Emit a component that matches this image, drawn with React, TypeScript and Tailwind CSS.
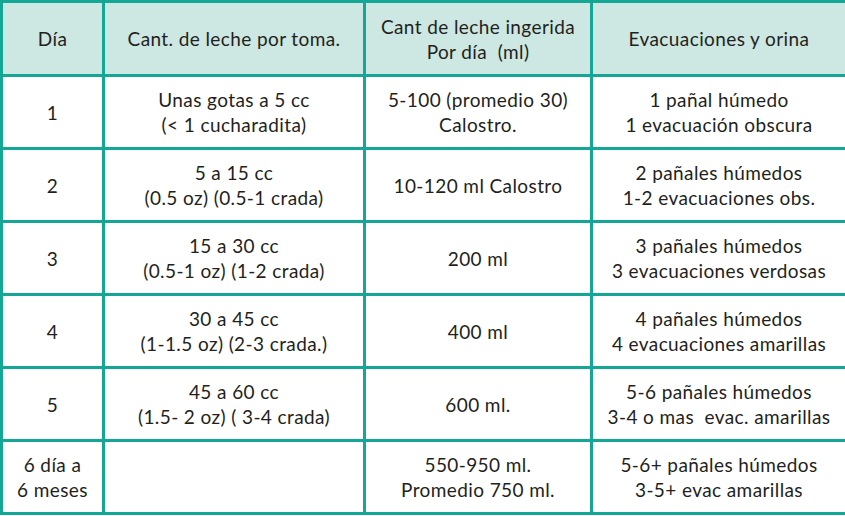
const rows: [string[], string[], string[], string[]][] = [
  [["1"], ["Unas gotas a 5 cc", "(< 1 cucharadita)"], ["5-100 (promedio 30)", "Calostro."], ["1 pañal húmedo", "1 evacuación obscura"]],
  [["2"], ["5 a 15 cc", "(0.5 oz) (0.5-1 crada)"], ["10-120 ml Calostro"], ["2 pañales húmedos", "1-2 evacuaciones obs."]],
  [["3"], ["15 a 30 cc", "(0.5-1 oz) (1-2 crada)"], ["200 ml"], ["3 pañales húmedos", "3 evacuaciones verdosas"]],
  [["4"], ["30 a 45 cc", "(1-1.5 oz) (2-3 crada.)"], ["400 ml"], ["4 pañales húmedos", "4 evacuaciones amarillas"]],
  [["5"], ["45 a 60 cc", "(1.5- 2 oz) ( 3-4 crada)"], ["600 ml."], ["5-6 pañales húmedos", "3-4 o mas\u00a0 evac. amarillas"]],
  [["6 día a", "6 meses"], [], ["550-950 ml.", "Promedio 750 ml."], ["5-6+ pañales húmedos", "3-5+ evac amarillas"]],
];

function Lines({ lines }: { lines: string[] }) {
  return (
    <>
      {lines.map((l, i) => (
        <div key={i} className="whitespace-pre">
          {l}
        </div>
      ))}
    </>
  );
}

export default function App() {
  const cell = "border-[3px] border-[#14a796] text-center align-middle px-0";
  return (
    <div className="w-[845px] h-[516px] bg-white font-['Lato',sans-serif] text-[19px] leading-[25px] tracking-[0.4px] text-[#231f20]">
      <table className="w-[845px] border-collapse table-fixed">
        <colgroup>
          <col className="w-[102px]" />
          <col className="w-[261px]" />
          <col className="w-[227px]" />
          <col className="w-[255px]" />
        </colgroup>
        <thead>
          <tr className="h-[74px] bg-[#cde7e2]">
            <th className={`${cell} font-normal`}>Día</th>
            <th className={`${cell} font-normal`}>Cant. de leche por toma.</th>
            <th className={`${cell} font-normal`}>
              <Lines lines={["Cant de leche ingerida", "Por día\u00a0 (ml)"]} />
            </th>
            <th className={`${cell} font-normal`}>Evacuaciones y orina</th>
          </tr>
        </thead>
        <tbody>
          {rows.map((r, i) => (
            <tr key={i} className="h-[73px]">
              {r.map((c, j) => (
                <td key={j} className={cell}>
                  <Lines lines={c} />
                </td>
              ))}
            </tr>
          ))}
        </tbody>
      </table>
    </div>
  );
}
